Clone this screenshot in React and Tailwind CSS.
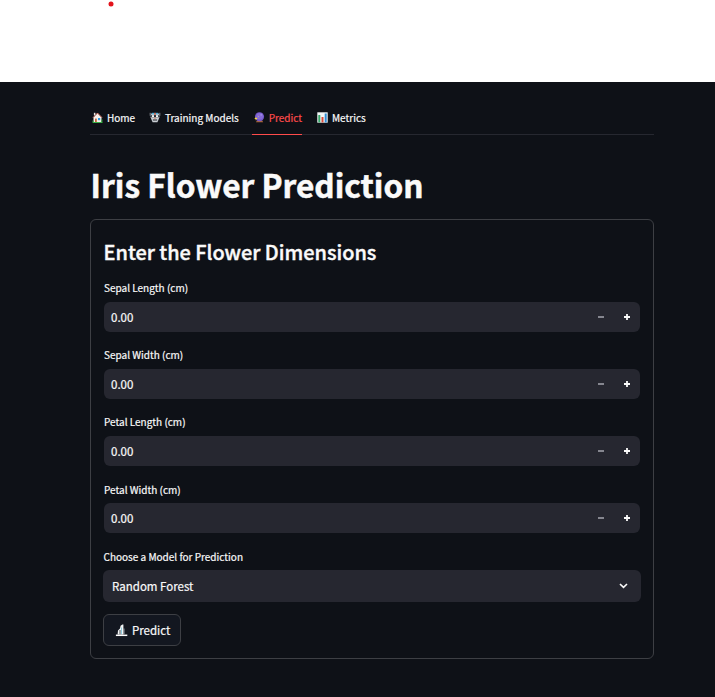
const FIELDS = [
  { label: 'Sepal Length (cm)', lift: 'top-[-1px]' },
  { label: 'Sepal Width (cm)', lift: 'top-[-1px]' },
  { label: 'Petal Length (cm)', lift: 'top-[-1px]' },
  { label: 'Petal Width (cm)', lift: 'top-0' },
];

function House() {
  return (
    <svg width="11" height="11" viewBox="0 0 11 11">
      <path d="M1.500 5.400 5.500 1.200l4 4.200v4.800h-8z" fill="#f6f1ec" />
      <path d="M1 5.600 5.500 1l4.500 4.600" fill="none" stroke="#e8806c" strokeWidth=".9" />
      <rect x="1.900" y=".8" width="1.500" height="2.600" fill="#e8e2df" />
      <rect x="3" y="6.600" width="1.800" height="3.400" fill="#c5643a" />
      <rect x="6" y="6" width="2.200" height="2.200" fill="#2f9be0" />
      <path d="M.8 10.500h9.600M9.900 7.500v3M1 8.500v2" stroke="#39b045" strokeWidth="1" />
    </svg>
  );
}

function Robot() {
  return (
    <svg width="12" height="11" viewBox="0 0 12 11">
      <path d="M1.200 .8v3M10.800 .8v3" stroke="#8a8f96" strokeWidth="1" />
      <path d="M2.200 1.500h7.600l.6 4L8.400 10.300H3.600L1.600 5.500z" fill="#c9ced2" />
      <path d="M2.800 1.600h6.400" stroke="#4eb2dc" strokeWidth="1.600" />
      <rect x="5.200" y=".9" width="1.600" height="1.800" fill="#e25b3c" />
      <path d="M2.200 4.200h7.600" stroke="#20252b" strokeWidth="2.200" />
      <circle cx="4" cy="4.200" r="1.100" fill="#fff" />
      <circle cx="8" cy="4.200" r="1.100" fill="#fff" />
      <path d="M5.300 6.200h1.400" stroke="#d86b4b" strokeWidth="1" />
      <path d="M3.900 8h4.200" stroke="#30343b" strokeWidth="1.100" />
    </svg>
  );
}

function CrystalBall() {
  return (
    <svg width="11" height="11" viewBox="0 0 11 11">
      <path d="M3 8.500h5.500l1 2H2z" fill="#a8653a" />
      <circle cx="5.700" cy="4.800" r="4.700" fill="#7559cb" />
      <circle cx="6" cy="4.200" r="3.400" fill="#856ad8" />
      <circle cx="7.400" cy="2.800" r=".8" fill="#a592ea" />
      <path d="m2 4.700.5 1.400 1.400.5-1.400.5L2 8.500l-.5-1.400L.1 6.600l1.400-.5z" fill="#ffe338" />
      <circle cx="4.500" cy="4.600" r=".5" fill="#ffd84a" />
    </svg>
  );
}

function BarChart() {
  return (
    <svg width="11" height="11" viewBox="0 0 11 11">
      <rect x=".3" y=".3" width="10.400" height="10.400" fill="#f3f7f8" />
      <rect x="1.300" y="3" width="2" height="7.400" fill="#36a567" />
      <rect x="4.500" y="5" width="2" height="5.400" fill="#d94b3a" />
      <rect x="7.700" y="1.500" width="2" height="8.900" fill="#2e8bd3" />
    </svg>
  );
}

function Plot() {
  return (
    <svg width="13" height="14" viewBox="0 0 13 14">
      <path d="M2.600 11.600 3 7.600l2-2.200.6-2.600L7.400 1.600h1v10z" fill="#f2f4f5" />
      <path d="M5 7v4.500" stroke="#22262c" strokeWidth=".8" />
      <path d="M6.500 4.500v6.500" stroke="#7fc4d8" strokeWidth=".9" />
      <path d="M9 5.500v5.500" stroke="#cfd4d8" strokeWidth=".7" />
      <path d="M.9 12.300h11.400" stroke="#fff" strokeWidth="1.500" />
    </svg>
  );
}

function Tab({ icon, label, width, active }) {
  return (
    <div className={`flex h-full items-center gap-[4px] border-b pb-px ${width} ${active ? 'border-[#ff4b4b] text-[#ff4b4b]' : 'border-transparent'}`}>
      {icon}
      <span className="whitespace-nowrap">{label}</span>
    </div>
  );
}

function NumberField({ label, lift }) {
  return (
    <div className="h-[67px]">
      <div className={`relative flex h-[20px] items-center text-[10px] ${lift}`}><span>{label}</span></div>
      <div className="mt-[4px] flex h-[30px] w-[536px] items-center rounded-md bg-[#262730] pl-[7px] pr-[10px] text-[11.500px]">
        <span className="grow pt-[2px]">0.00</span>
        <svg width="6" height="6" viewBox="0 0 6 6" className="mr-5"><path d="M0 3h6" stroke="#85868f" strokeWidth="2" /></svg>
        <svg width="6" height="6" viewBox="0 0 6 6"><path d="M0 3h6M3 0v6" stroke="#fafafa" strokeWidth="1.800" /></svg>
      </div>
    </div>
  );
}

export default function App() {
  return (
    <div className="h-[697px] w-[715px] overflow-hidden bg-white font-['Noto_Sans_CJK_JP',sans-serif] text-[#fafafa] [-webkit-text-stroke:0.2px_currentColor]">
      <div className="h-[82px] pl-[108px] pt-px">
        <svg width="6" height="6" viewBox="0 0 6 6"><circle cx="3" cy="3" r="2.500" fill="#e3131b" /></svg>
      </div>
      <div className="h-[615px] bg-[#0e1117] pl-[90px] pt-[20px]">
        <nav className="flex h-[33px] w-[564px] border-b border-[#262830] text-[10px]">
          <div className="-mb-px flex">
            <Tab icon={<House />} label="Home" width="w-[59px] pl-[2px]" />
            <Tab icon={<Robot />} label="Training Models" width="w-[103px]" />
            <Tab icon={<CrystalBall />} label="Predict" width="w-[50px] pl-[2px]" active />
            <Tab icon={<BarChart />} label="Metrics" width="w-[70px] pl-[15px]" />
          </div>
        </nav>
        <h1 className="mt-[29px] flex h-[42px] items-center whitespace-nowrap pl-[0.600px] text-[31.600px] font-bold [-webkit-text-stroke:0.5px_currentColor]">Iris Flower Prediction</h1>
        <section className="mt-[13px] h-[440px] w-[564px] rounded-md border border-[#3d3f44] pl-[12px] pt-[16px]">
          <h2 className="flex h-[32px] items-center pl-[0.600px] text-[19.900px] font-medium [-webkit-text-stroke:0.4px_currentColor]"><span>Enter the Flower Dimensions</span></h2>
          <div className="mt-[10px] pl-px">
            {FIELDS.map((f) => <NumberField key={f.label} {...f} />)}
          </div>
          <div className="flex h-[20px] items-center pl-[0.500px] text-[10px]"><span>Choose a Model for Prediction</span></div>
          <div className="mt-[4px] flex h-[32px] w-[538px] items-center justify-between rounded-md bg-[#262730] pl-[9px] pr-[13px] text-[11.500px]">
            <span className="pt-[2px]">Random Forest</span>
            <svg width="9" height="6" viewBox="0 0 9 6"><path d="m1 1 3.500 3.400L8 1" fill="none" stroke="#fafafa" strokeWidth="1.600" /></svg>
          </div>
          <button className="mt-[12px] flex h-[32px] w-[78px] items-center rounded-md border border-[#3d3f44] bg-[#131720] pl-[11px] text-[11.500px]">
            <Plot />
            <span className="ml-[4px] pt-[2px]">Predict</span>
          </button>
        </section>
      </div>
    </div>
  );
}
